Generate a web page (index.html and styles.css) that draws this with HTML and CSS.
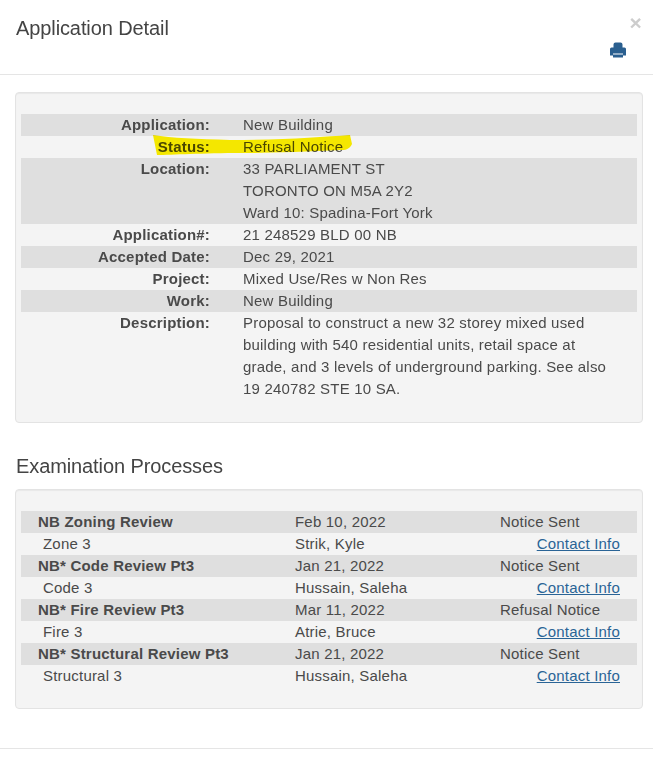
FILE: index.html
```html
<!DOCTYPE html>
<html lang="en">
<head>
<meta charset="utf-8">
<title>Application Detail</title>
<link rel="stylesheet" href="styles.css">
</head>
<body>
<div class="modal">
  <header class="modal-header">
    <div class="close">&times;</div>
    <h1 class="modal-title">Application Detail</h1>
    <div class="print-row">
      <svg class="print-icon" viewBox="0 0 16 16" aria-hidden="true"><path fill-rule="evenodd" d="M3.500 2.500Q3.500 .5 5.500 .5H10.500Q12.500 .5 12.500 2.500V5.500H14.500Q16 5.500 16 7V13.500H13V11.500H3V13.500H0V7Q0 5.500 1.500 5.500H3.500ZM3 12.500H13V15.500H3Z"/></svg>
    </div>
  </header>
  <section class="modal-body">
    <div class="well detail-well">
      <svg class="highlight" viewBox="0 0 202 22" preserveAspectRatio="none" aria-hidden="true"><path d="M1 1C20 4 45 5 78 6 130 6 170 3 198 1L200 10C198 14 195 16 190 16 150 18 110 19 90 19 50 19 20 21 5 21Z"/></svg>
      <div class="detail-row shade"><div class="label">Application:</div><div class="value">New Building</div></div>
      <div class="detail-row"><div class="label">Status:</div><div class="value">Refusal Notice</div></div>
      <div class="detail-row shade"><div class="label">Location:</div><div class="value">33 PARLIAMENT ST<br>TORONTO ON M5A 2Y2<br>Ward 10: Spadina-Fort York</div></div>
      <div class="detail-row"><div class="label">Application#:</div><div class="value">21 248529 BLD 00 NB</div></div>
      <div class="detail-row shade"><div class="label">Accepted Date:</div><div class="value">Dec 29, 2021</div></div>
      <div class="detail-row"><div class="label">Project:</div><div class="value">Mixed Use/Res w Non Res</div></div>
      <div class="detail-row shade"><div class="label">Work:</div><div class="value">New Building</div></div>
      <div class="detail-row"><div class="label">Description:</div><div class="value">Proposal to construct a new 32 storey mixed used building with 540 residential units, retail space at grade, and 3 levels of underground parking. See also 19 240782 STE 10 SA.</div></div>
    </div>
    <h2 class="section-title">Examination Processes</h2>
    <div class="well process-well">
      <div class="process-row shade"><div class="name">NB Zoning Review</div><div>Feb 10, 2022</div><div>Notice Sent</div></div>
      <div class="process-row"><div class="sub">Zone 3</div><div>Strik, Kyle</div><a class="contact" href="#">Contact Info</a></div>
      <div class="process-row shade"><div class="name">NB* Code Review Pt3</div><div>Jan 21, 2022</div><div>Notice Sent</div></div>
      <div class="process-row"><div class="sub">Code 3</div><div>Hussain, Saleha</div><a class="contact" href="#">Contact Info</a></div>
      <div class="process-row shade"><div class="name">NB* Fire Review Pt3</div><div>Mar 11, 2022</div><div>Refusal Notice</div></div>
      <div class="process-row"><div class="sub">Fire 3</div><div>Atrie, Bruce</div><a class="contact" href="#">Contact Info</a></div>
      <div class="process-row shade"><div class="name">NB* Structural Review Pt3</div><div>Jan 21, 2022</div><div>Notice Sent</div></div>
      <div class="process-row"><div class="sub">Structural 3</div><div>Hussain, Saleha</div><a class="contact" href="#">Contact Info</a></div>
    </div>
  </section>
  <footer class="modal-footer"></footer>
</div>
</body>
</html>
```
FILE: styles.css
```css
* { box-sizing: border-box; }
html, body { margin: 0; background: #fff; }
body {
  font-family: "Liberation Sans", Arial, sans-serif;
  font-size: 15px;
  letter-spacing: .2px;
  line-height: 22px;
  color: #4a4a4a;
  overflow: hidden;
}
.modal { width: 653px; height: 767px; }
.modal-header {
  position: relative;
  height: 75px;
  padding: 17px 15px 0 16px;
  border-bottom: 1px solid #e5e5e5;
}
.close {
  position: absolute;
  top: 12px;
  right: 11px;
  font-size: 21px;
  line-height: 21px;
  font-weight: 700;
  color: #cdcdcd;
}
.modal-title {
  margin: 0;
  font-size: 20px;
  line-height: 22px;
  font-weight: 400;
  letter-spacing: -.1px;
  color: #444;
}
.print-row { display: flex; justify-content: flex-end; padding: 3px 12px 0 0; }
.print-icon { display: block; width: 16px; height: 16px; fill: #2a5f8f; }
.modal-body { padding: 17px 10px 0 15px; }
.well {
  position: relative;
  background: #f4f4f4;
  border: 1px solid #e3e3e3;
  border-radius: 4px;
  box-shadow: inset 0 1px 1px rgba(0,0,0,.05);
  padding: 21px 5px 19px;
}
.detail-well { height: 331px; }
.process-well { height: 220px; }
.shade { background: #dfdfdf; }
.highlight {
  position: absolute;
  left: 136px;
  top: 41px;
  width: 202px;
  height: 22px;
  fill: #fff200;
  mix-blend-mode: multiply;
}
.detail-row { display: grid; grid-template-columns: 189px 1fr; column-gap: 33px; }
.label { text-align: right; font-weight: 700; }
.value { padding-right: 28px; }
.section-title {
  margin: 32px 0 12px 1px;
  font-size: 20px;
  line-height: 22px;
  font-weight: 400;
  letter-spacing: -.1px;
  color: #444;
}
.process-row {
  display: grid;
  grid-template-columns: 274px 205px 1fr;
  padding-right: 17px;
}
.name { padding-left: 17px; font-weight: 700; }
.sub { padding-left: 22px; }
.contact { text-align: right; color: #2a6496; text-decoration: underline; }
.modal-footer { margin-top: 39px; border-top: 1px solid #e5e5e5; }
```
